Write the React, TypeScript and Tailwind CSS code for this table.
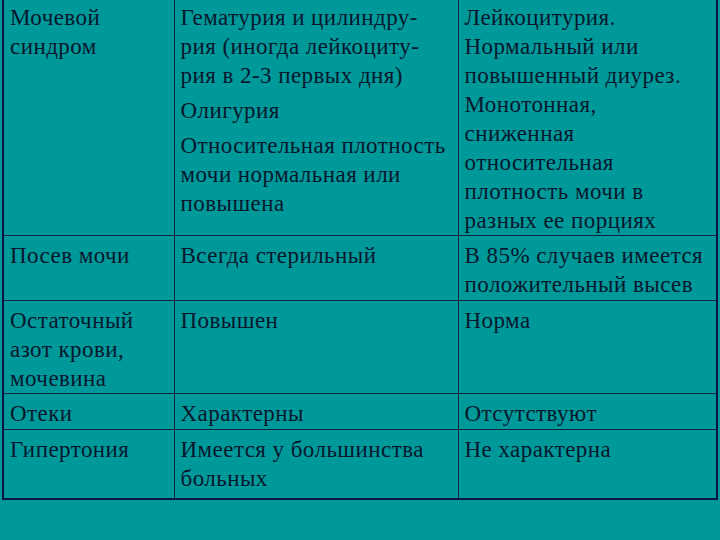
const rows: { h: string; pt: string; cells: string[][][] }[] = [
  {
    h: 'h-[235px]',
    pt: 'pt-[3px]',
    cells: [
      [['Мочевой', 'синдром']],
      [
        ['Гематурия и цилиндру-', 'рия (иногда лейкоциту-', 'рия в 2-3 первых дня)'],
        ['Олигурия'],
        ['Относительная плотность', 'мочи нормальная или', 'повышена'],
      ],
      [
        [
          'Лейкоцитурия.',
          'Нормальный или',
          'повышенный диурез.',
          'Монотонная,',
          'сниженная',
          'относительная',
          'плотность мочи в',
          'разных ее порциях',
        ],
      ],
    ],
  },
  {
    h: 'h-[65px]',
    pt: 'pt-[5px]',
    cells: [[['Посев мочи']], [['Всегда стерильный']], [['В 85% случаев имеется', 'положительный высев']]],
  },
  {
    h: 'h-[93px]',
    pt: 'pt-[5px]',
    cells: [[['Остаточный', 'азот крови,', 'мочевина']], [['Повышен']], [['Норма']]],
  },
  {
    h: 'h-[36px]',
    pt: 'pt-[5px]',
    cells: [[['Отеки']], [['Характерны']], [['Отсутствуют']]],
  },
  {
    h: 'h-[69px]',
    pt: 'pt-[5px]',
    cells: [[['Гипертония']], [['Имеется у большинства', 'больных']], [['Не характерна']]],
  },
];

export default function App() {
  return (
    <div
      className="w-[720px] h-[540px] bg-[#009999] overflow-hidden text-[#07172e]"
      style={{ fontFamily: '"Liberation Serif", "Times New Roman", serif' }}
    >
      <div className="pl-[2px]">
        <table className="table-fixed border-collapse w-[714px] border-x-2 border-b-2 border-[#0a1640]">
          <colgroup>
            <col className="w-[171px]" />
            <col className="w-[284px]" />
            <col className="w-[259px]" />
          </colgroup>
          <tbody>
            {rows.map((row, ri) => (
              <tr key={ri} className={`${row.h} ${ri > 0 ? 'border-t border-[#0a2440]' : ''}`}>
                {row.cells.map((paras, ci) => (
                  <td
                    key={ci}
                    className={`align-top pl-[6px] pr-0 ${row.pt} ${ci > 0 ? 'border-l border-[#0a2440]' : ''}`}
                  >
                    <div className="flex flex-col gap-[6px]">
                      {paras.map((lines, pi) => (
                        <div key={pi} className="text-[23px] leading-[29px] tracking-[0.45px]">
                          {lines.map((l, li) => (
                            <div key={li} className="whitespace-nowrap">
                              {l}
                            </div>
                          ))}
                        </div>
                      ))}
                    </div>
                  </td>
                ))}
              </tr>
            ))}
          </tbody>
        </table>
      </div>
    </div>
  );
}
